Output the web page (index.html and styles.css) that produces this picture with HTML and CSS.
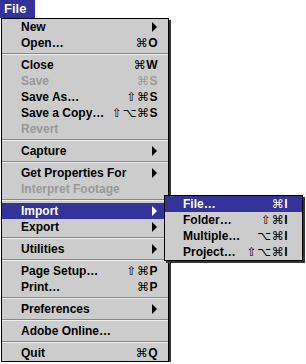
FILE: index.html
```html
<!DOCTYPE html>
<html lang="en">
<head>
  <meta charset="UTF-8" />
  <title>File menu</title>
  <link rel="stylesheet" href="styles.css">
</head>
<body>

  <div class="menubar">
    <span class="title">File</span>
  </div>

  <div class="menu">
    <div class="item">New <span class="arrow"></span></div>
    <div class="item">Open… <span class="key">⌘<b>O</b></span></div>
    <div class="sep"></div>
    <div class="item">Close <span class="key">⌘<b>W</b></span></div>
    <div class="item off">Save <span class="key">⌘<b>S</b></span></div>
    <div class="item">Save As… <span class="key">⇧⌘<b>S</b></span></div>
    <div class="item">Save a Copy… <span class="key">⇧⌥⌘<b>S</b></span></div>
    <div class="item off">Revert</div>
    <div class="sep"></div>
    <div class="item">Capture <span class="arrow"></span></div>
    <div class="sep"></div>
    <div class="item">Get Properties For <span class="arrow"></span></div>
    <div class="item off">Interpret Footage</div>
    <div class="sep"></div>
    <div class="item active">Import <span class="arrow"></span></div>
    <div class="item">Export <span class="arrow"></span></div>
    <div class="sep"></div>
    <div class="item">Utilities <span class="arrow"></span></div>
    <div class="sep"></div>
    <div class="item">Page Setup… <span class="key">⇧⌘<b>P</b></span></div>
    <div class="item">Print… <span class="key">⌘<b>P</b></span></div>
    <div class="sep"></div>
    <div class="item">Preferences <span class="arrow"></span></div>
    <div class="sep"></div>
    <div class="item">Adobe Online…</div>
    <div class="sep"></div>
    <div class="item">Quit <span class="key">⌘<b>Q</b></span></div>
  </div>

  <div class="menu submenu">
    <div class="item active">File… <span class="key">⌘<b>I</b></span></div>
    <div class="item">Folder… <span class="key">⇧⌘<b>I</b></span></div>
    <div class="item">Multiple… <span class="key">⌥⌘<b>I</b></span></div>
    <div class="item">Project… <span class="key">⇧⌥⌘<b>I</b></span></div>
  </div>

</body>
</html>
```

FILE: styles.css
```css
body {
  margin: 0;
  background: #fff;
  font-family: 'Liberation Sans', Arial, sans-serif;
  font-weight: bold;
  font-size: 12px;
  color: #000;
}

.menubar {
  height: 18px;
}

.menubar .title {
  display: inline-block;
  width: 31px;
  height: 18px;
  line-height: 18px;
  padding-left: 4px;
  font-size: 13px;
  background: #333399;
  color: #fff;
}

.menu {
  width: 166px;
  margin-left: 1px;
  background: #cccccc;
  border: 1px solid #000;
  box-shadow: 2px 2px 0 #333;
}

.item {
  display: flex;
  justify-content: space-between;
  align-items: center;
  height: 16px;
  line-height: 16px;
  padding: 0 10px 0 19px;
  white-space: nowrap;
}

.item.off {
  color: #999;
}

.item.active {
  background: #333399;
  color: #fff;
}

.sep {
  height: 1px;
  margin: 2px 0;
  background: #888;
  border-bottom: 1px solid #eee;
}

.arrow {
  width: 0;
  height: 0;
  margin-right: 1px;
  border-left: 5px solid currentColor;
  border-top: 5px solid transparent;
  border-bottom: 5px solid transparent;
}

.key {
  font-family: 'DejaVu Sans', sans-serif;
  font-weight: normal;
  font-size: 12px;
  letter-spacing: 0.5px;
}

.key b {
  font-family: 'Liberation Sans', Arial, sans-serif;
  font-size: 12px;
}

.submenu {
  position: absolute;
  left: 164px;
  top: 195px;
  width: 137px;
  margin: 0;
}

.submenu .item {
  padding: 0 14px 0 18px;
}
```
